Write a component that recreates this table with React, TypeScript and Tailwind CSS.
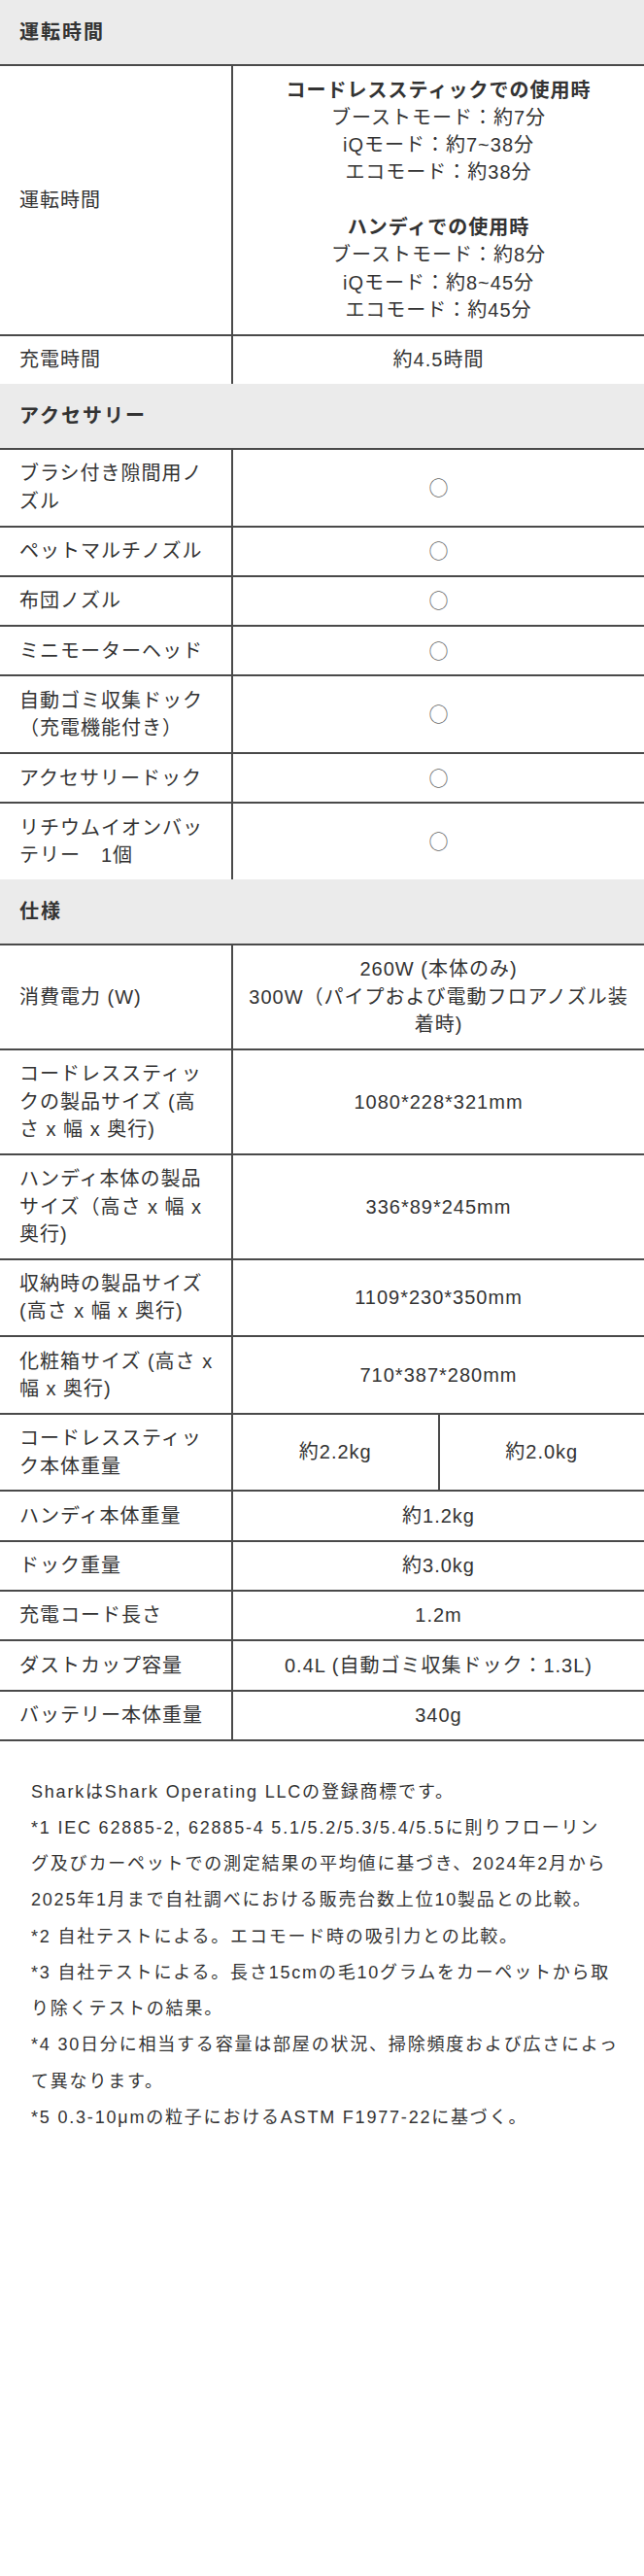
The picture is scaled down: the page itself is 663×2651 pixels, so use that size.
import React from "react";

type SpecRow = {
  label: React.ReactNode;
  value?: React.ReactNode;
  split?: [string, string];
  circle?: boolean;
};

const line = "border-[#4a4a4a]";

function Lines({ items }: { items: string[] }) {
  return (
    <div>
      {items.map((t, i) => (
        <span key={i} className="block">
          {t}
        </span>
      ))}
    </div>
  );
}

function SectionHeader({ title }: { title: string }) {
  return (
    <div className={`h-[68px] bg-[#ebebeb] border-b-2 ${line} flex items-center pl-[20px]`}>
      <h2 className="text-[20px] font-bold tracking-[0.1em] text-[#333]">{title}</h2>
    </div>
  );
}

function Row({ row, first }: { row: SpecRow; first: boolean }) {
  return (
    <div className={first ? "flex" : "flex border-t-2 border-[#4a4a4a]"}>
      <div className={`w-[240px] shrink-0 border-r-2 ${line} pl-[20px] pr-[8px] py-[10.5px] flex items-center`}>
        <div>{row.label}</div>
      </div>
      {row.split ? (
        <div className="flex-1 flex">
          <div className="flex-1 flex items-center justify-center py-[10.5px]">{row.split[0]}</div>
          <div className={`flex-1 flex items-center justify-center border-l-2 ${line} py-[10.5px]`}>{row.split[1]}</div>
        </div>
      ) : (
        <div className="flex-1 flex items-center justify-center text-center px-[10px] py-[10.5px]">
          {row.circle ? (
            <span className="font-['Noto_Sans_CJK_JP',sans-serif] text-[#666] tracking-normal">○</span>
          ) : (
            <div>{row.value}</div>
          )}
        </div>
      )}
    </div>
  );
}

function Section({ title, rows }: { title: string; rows: SpecRow[] }) {
  return (
    <section>
      <SectionHeader title={title} />
      {rows.map((r, i) => (
        <Row key={i} row={r} first={i === 0} />
      ))}
    </section>
  );
}

const runtime: SpecRow[] = [
  {
    label: "運転時間",
    value: (
      <div>
        <span className="block font-bold">コードレススティックでの使用時</span>
        <Lines items={["ブーストモード：約7分", "iQモード：約7~38分", "エコモード：約38分"]} />
        <span className="block h-[28.3px]"></span>
        <span className="block font-bold">ハンディでの使用時</span>
        <Lines items={["ブーストモード：約8分", "iQモード：約8~45分", "エコモード：約45分"]} />
      </div>
    ),
  },
  { label: "充電時間", value: "約4.5時間" },
];

const accessories: SpecRow[] = [
  { label: <Lines items={["ブラシ付き隙間用ノ", "ズル"]} />, circle: true },
  { label: "ペットマルチノズル", circle: true },
  { label: "布団ノズル", circle: true },
  { label: "ミニモーターヘッド", circle: true },
  { label: <Lines items={["自動ゴミ収集ドック", "（充電機能付き）"]} />, circle: true },
  { label: "アクセサリードック", circle: true },
  { label: <Lines items={["リチウムイオンバッ", "テリー　1個"]} />, circle: true },
];

const specs: SpecRow[] = [
  {
    label: "消費電力 (W)",
    value: <Lines items={["260W (本体のみ)", "300W（パイプおよび電動フロアノズル装", "着時)"]} />,
  },
  { label: <Lines items={["コードレススティッ", "クの製品サイズ (高", "さ x 幅 x 奥行)"]} />, value: "1080*228*321mm" },
  { label: <Lines items={["ハンディ本体の製品", "サイズ（高さ x 幅 x", "奥行)"]} />, value: "336*89*245mm" },
  { label: <Lines items={["収納時の製品サイズ", "(高さ x 幅 x 奥行)"]} />, value: "1109*230*350mm" },
  { label: <Lines items={["化粧箱サイズ (高さ x", "幅 x 奥行)"]} />, value: "710*387*280mm" },
  { label: <Lines items={["コードレススティッ", "ク本体重量"]} />, split: ["約2.2kg", "約2.0kg"] },
  { label: "ハンディ本体重量", value: "約1.2kg" },
  { label: "ドック重量", value: "約3.0kg" },
  { label: "充電コード長さ", value: "1.2m" },
  { label: "ダストカップ容量", value: "0.4L (自動ゴミ収集ドック：1.3L)" },
  { label: "バッテリー本体重量", value: "340g" },
];

const notes = [
  ["SharkはShark Operating LLCの登録商標です。"],
  [
    "*1 IEC 62885-2, 62885-4 5.1/5.2/5.3/5.4/5.5に則りフローリン",
    "グ及びカーペットでの測定結果の平均値に基づき、2024年2月から",
    "2025年1月まで自社調べにおける販売台数上位10製品との比較。",
  ],
  ["*2 自社テストによる。エコモード時の吸引力との比較。"],
  ["*3 自社テストによる。長さ15cmの毛10グラムをカーペットから取", "り除くテストの結果。"],
  ["*4 30日分に相当する容量は部屋の状況、掃除頻度および広さによっ", "て異なります。"],
  ["*5 0.3-10μmの粒子におけるASTM F1977-22に基づく。"],
];

export default function App() {
  return (
    <div className="w-[663px] min-h-[2651px] bg-white text-[#333] font-['Liberation_Sans','Noto_Sans_CJK_JP',sans-serif]">
      <div className={`text-[20px] leading-[28.3px] tracking-[0.05em] border-b-2 ${line}`}>
        <Section title="運転時間" rows={runtime} />
        <Section title="アクセサリー" rows={accessories} />
        <Section title="仕様" rows={specs} />
      </div>

      {/* footnotes */}
      <div className="px-[32px] pt-[34px] text-[18px] leading-[37.2px] tracking-[0.1em] text-[#333]">
        {notes.map((n, i) => (
          <p key={i} className="whitespace-nowrap">
            {n.map((t, j) => (
              <span key={j} className="block">
                {t}
              </span>
            ))}
          </p>
        ))}
      </div>
    </div>
  );
}
